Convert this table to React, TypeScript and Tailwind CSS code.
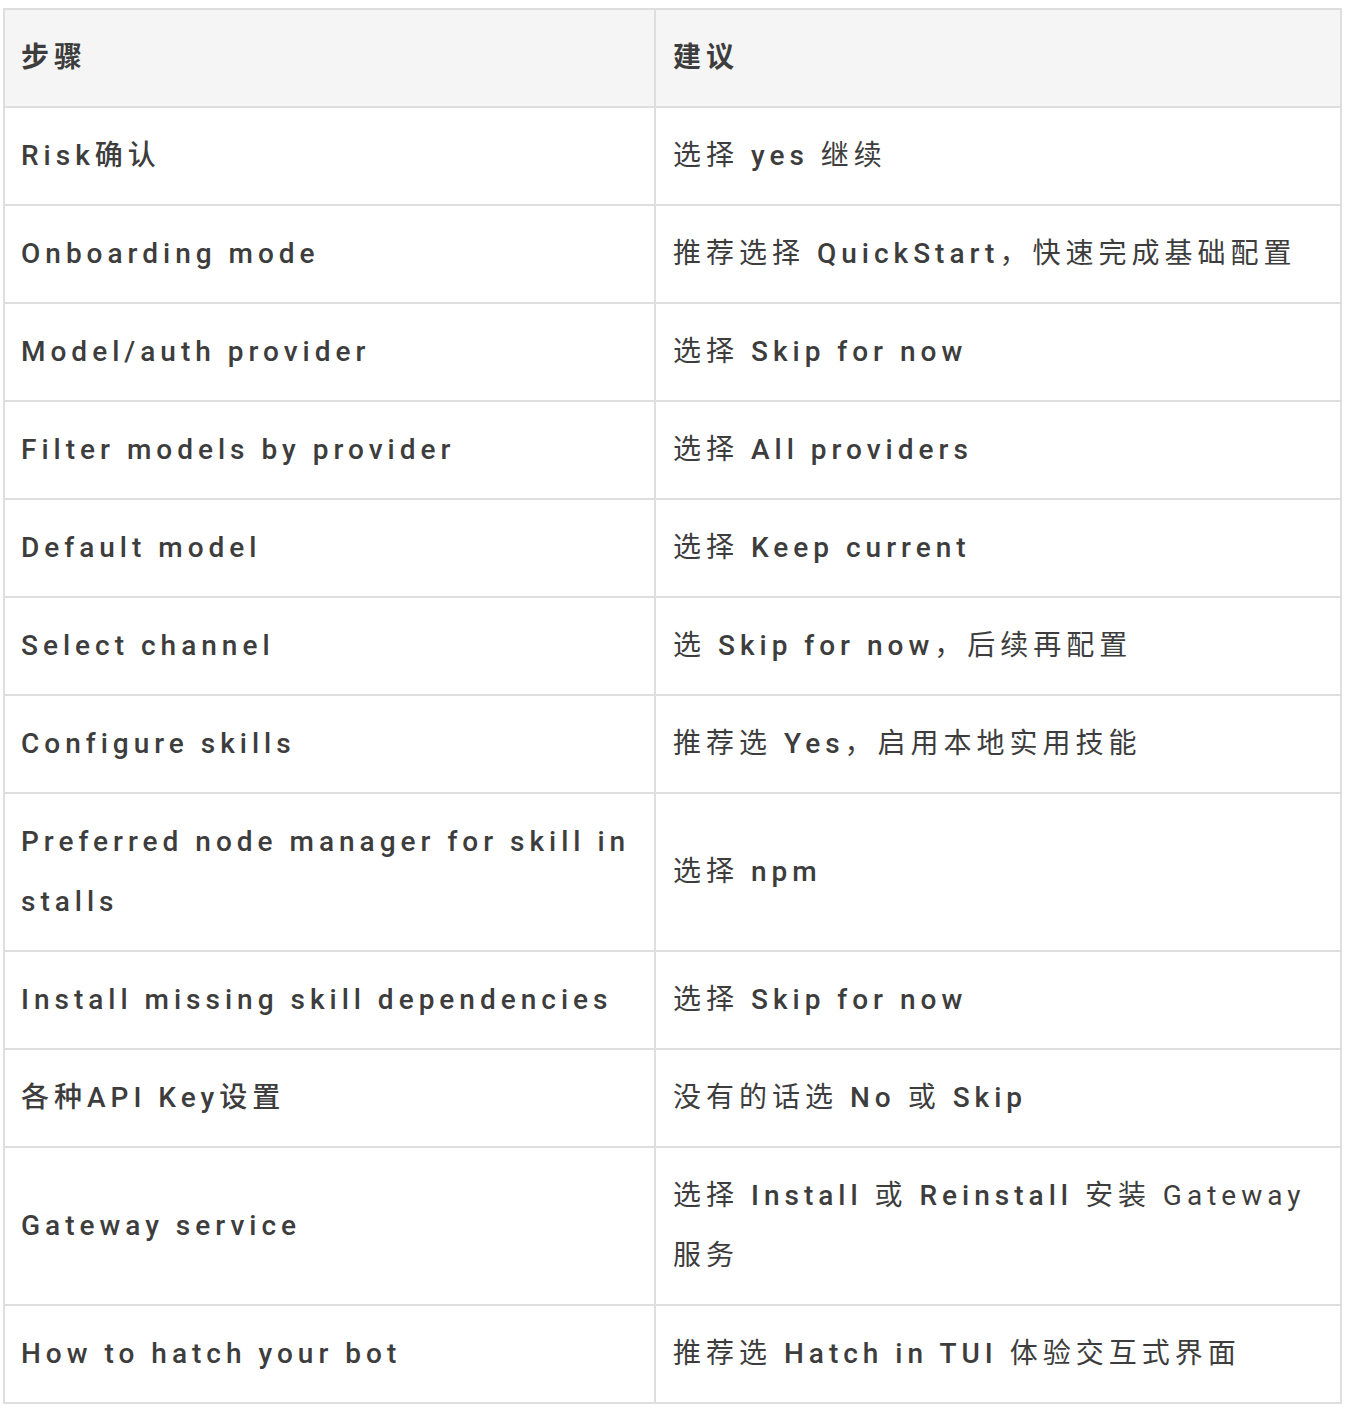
const FONT = "font-['Roboto','Noto_Sans_CJK_SC',sans-serif]";

type Part = string | { b: string };

interface Row {
  step: string;
  tip: Part[];
}

// steps + suggestions, latin keywords are set slightly heavier
const rows: Row[] = [
  { step: "Risk确认", tip: ["选择 ", { b: "yes" }, " 继续"] },
  { step: "Onboarding mode", tip: ["推荐选择 ", { b: "QuickStart" }, "，快速完成基础配置"] },
  { step: "Model/auth provider", tip: ["选择 ", { b: "Skip for now" }] },
  { step: "Filter models by provider", tip: ["选择 ", { b: "All providers" }] },
  { step: "Default model", tip: ["选择 ", { b: "Keep current" }] },
  { step: "Select channel", tip: ["选 ", { b: "Skip for now" }, "，后续再配置"] },
  { step: "Configure skills", tip: ["推荐选 ", { b: "Yes" }, "，启用本地实用技能"] },
  { step: "Preferred node manager for skill in stalls", tip: ["选择 ", { b: "npm" }] },
  { step: "Install missing skill dependencies", tip: ["选择 ", { b: "Skip for now" }] },
  { step: "各种API Key设置", tip: ["没有的话选 ", { b: "No" }, " 或 ", { b: "Skip" }] },
  {
    step: "Gateway service",
    tip: ["选择 ", { b: "Install" }, " 或 ", { b: "Reinstall" }, " 安装 Gateway 服务"],
  },
  { step: "How to hatch your bot", tip: ["推荐选 ", { b: "Hatch in TUI" }, " 体验交互式界面"] },
];

const cell =
  "border-2 border-[#dedede] pr-[17px] py-[18px] text-left align-middle text-justify leading-[60px]";

export default function App() {
  return (
    <div className={`min-h-[1414px] bg-white pt-[8px] pl-[3px] ${FONT}`}>
      <table className="w-[1337px] table-fixed border-collapse text-[28px] tracking-[5px] text-[#3d3d3d]">
        <colgroup>
          <col className="w-[651px]" />
          <col className="w-[686px]" />
        </colgroup>
        <thead>
          <tr className="bg-[#f5f5f5]">
            <th className={`${cell} pl-[16px] font-bold`}>步骤</th>
            <th className={`${cell} pl-[17px] font-bold`}>建议</th>
          </tr>
        </thead>
        <tbody>
          {rows.map((r) => (
            <tr key={r.step}>
              <td className={`${cell} pl-[16px] font-medium`}>{r.step}</td>
              <td className={`${cell} pl-[17px] font-normal`}>
                {r.tip.map((p, i) =>
                  typeof p === "string" ? (
                    <span key={i}>{p}</span>
                  ) : (
                    <span key={i} className="font-medium">
                      {p.b}
                    </span>
                  )
                )}
              </td>
            </tr>
          ))}
        </tbody>
      </table>
    </div>
  );
}
